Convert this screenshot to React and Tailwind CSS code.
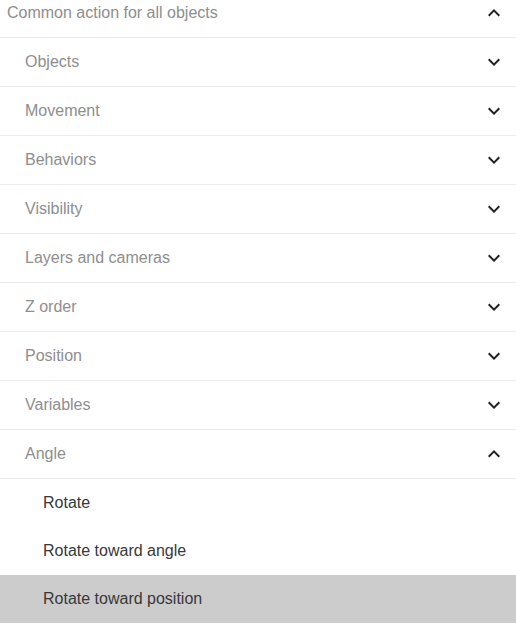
import React from "react";

const Chevron = ({ up }) => (
  <svg width="24" height="24" viewBox="0 0 24 24" className="shrink-0" fill="#222">
    {up ? (
      <path d="M12 8l-6 6 1.41 1.41L12 10.83l4.59 4.58L18 14z" />
    ) : (
      <path d="M16.59 8.59L12 13.17 7.41 8.59 6 10l6 6 6-6z" />
    )}
  </svg>
);

const Row = ({ label, up, indent }) => (
  <div
    className={`flex h-[49px] items-center justify-between border-b border-[#ececec] pr-[10px] ${
      indent ? "pl-[25px]" : "pl-[7px]"
    }`}
  >
    <span className="text-[16px] text-[#8e8e8e]">{label}</span>
    <Chevron up={up} />
  </div>
);

const Sub = ({ label, selected }) => (
  <div
    className={`flex h-[48px] items-center pl-[43px] ${selected ? "bg-[#cccccc]" : ""}`}
  >
    <span className="text-[16px] text-[#383838]">{label}</span>
  </div>
);

export default function App() {
  const cats = [
    "Objects",
    "Movement",
    "Behaviors",
    "Visibility",
    "Layers and cameras",
    "Z order",
    "Position",
    "Variables",
  ];
  return (
    <div
      className="h-[638px] w-[516px] overflow-hidden bg-white"
      style={{ fontFamily: '"Liberation Sans", Arial, sans-serif' }}
    >
      <div className="-mt-[11px]">
        <Row label="Common action for all objects" up />
        {cats.map((c) => (
          <Row key={c} label={c} indent />
        ))}
        <Row label="Angle" up indent />
        <Sub label="Rotate" />
        <Sub label="Rotate toward angle" />
        <Sub label="Rotate toward position" selected />
      </div>
    </div>
  );
}
